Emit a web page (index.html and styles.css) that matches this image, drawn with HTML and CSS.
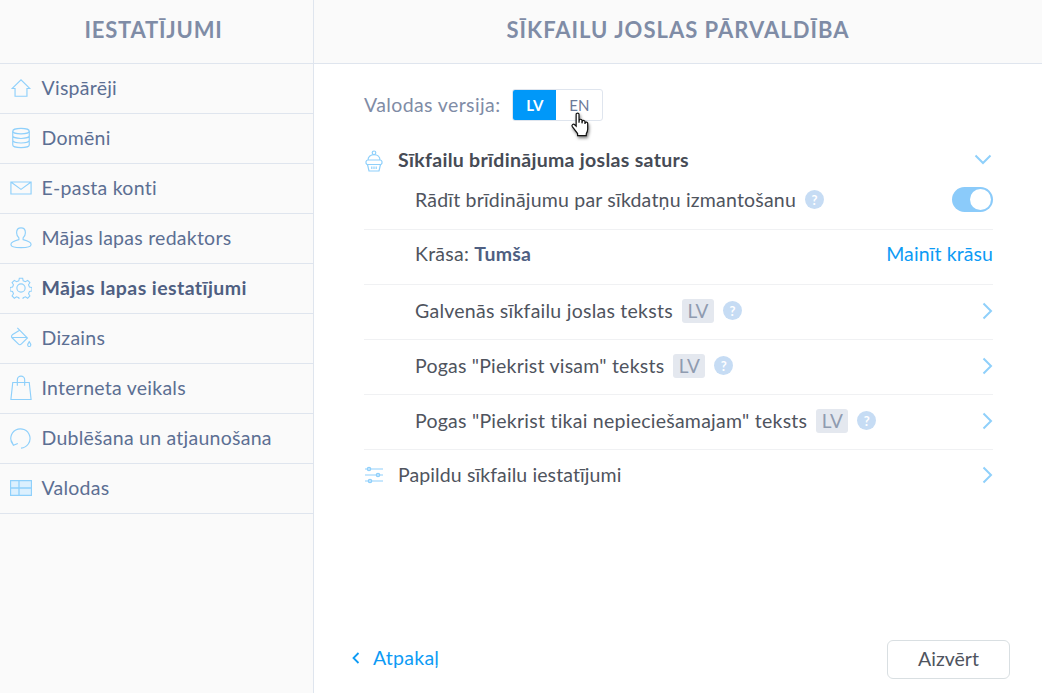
FILE: index.html
```html
<!DOCTYPE html>
<html lang="lv">
<head>
<meta charset="utf-8">
<title>Iestatījumi</title>
<link rel="stylesheet" href="styles.css">
</head>
<body>
<div class="app">
  <aside class="sidebar">
    <header class="head head-side">IESTATĪJUMI</header>
    <nav class="nav">
      <a class="nav-item"><svg class="nav-ico" viewBox="0 0 24 24"><path d="M2.500 12.500 12 3l9.500 9.500h-3V21h-13v-8.500z"/></svg>Vispārēji</a>
      <a class="nav-item"><svg class="nav-ico" viewBox="0 0 24 24"><ellipse cx="12" cy="4.500" rx="9" ry="3"/><path d="M3 4.500v15c0 1.600 4 3 9 3s9-1.400 9-3v-15M3 9.500c0 1.600 4 3 9 3s9-1.400 9-3M3 14.500c0 1.600 4 3 9 3s9-1.400 9-3"/></svg>Domēni</a>
      <a class="nav-item"><svg class="nav-ico" viewBox="0 0 24 24"><path d="M1 5.500h22v13H1zM1 5.500 12 13.500l11-8"/></svg>E-pasta konti</a>
      <a class="nav-item"><svg class="nav-ico" viewBox="0 0 24 24"><path d="M12 1c-3 0-4.800 2.300-4.800 5.300 0 2.500 1.200 4.300 2.500 5.500v2c-3 .8-8.700 2.300-8.700 5.200 0 2.300 3.500 3.500 11 3.500s11-1.200 11-3.500c0-2.900-5.700-4.400-8.700-5.200v-2c1.300-1.200 2.500-3 2.500-5.500C16.800 3.300 15 1 12 1z"/></svg>Mājas lapas redaktors</a>
      <a class="nav-item is-active"><svg class="nav-ico" viewBox="0 0 24 24"><circle cx="12" cy="12" r="4.500"/><path d="M10 1h4l.6 3 2.700 1.100 2.600-1.700 2.700 2.700-1.700 2.600 1.100 2.700 3 .6v4l-3 .6-1.100 2.700 1.700 2.600-2.700 2.700-2.600-1.700-2.700 1.100-.6 3h-4l-.6-3-2.700-1.100-2.600 1.700-2.700-2.700 1.700-2.600-1.100-2.700-3-.6v-4l3-.6 1.100-2.700-1.700-2.600 2.700-2.700 2.600 1.700L9.400 4z" transform="translate(12 12) scale(.92) translate(-12 -12.500)"/></svg>Mājas lapas iestatījumi</a>
      <a class="nav-item"><svg class="nav-ico" viewBox="0 0 24 24"><path d="M10.500 3.500 19 12l-6.500 6.500a2.500 2.500 0 0 1-3.500 0L2.500 12a2.500 2.500 0 0 1 0-3.500zM1.500 11.500h17.200M8 1l2.500 2.500M21 16c-1 1.500-1.700 2.500-1.700 3.600a1.700 1.700 0 0 0 3.400 0c0-1.100-.7-2.100-1.700-3.600z"/></svg>Dizains</a>
      <a class="nav-item"><svg class="nav-ico ico-tall" viewBox="0 0 24 27"><path d="M3 7.500h18l2 18.500H1zM8 11V4.500a4 4 0 0 1 8 0V11"/></svg>Interneta veikals</a>
      <a class="nav-item"><svg class="nav-ico" viewBox="0 0 24 24"><path d="M3.500 19.500A10.500 10.500 0 1 1 12 23M1.500 15l2.200 5 4.800-2"/></svg>Dublēšana un atjaunošana</a>
      <a class="nav-item"><svg class="nav-ico ico-table" viewBox="0 0 22 16"><path d="M.500.500h21v15H.500zM.500 8h21M9 .500v15"/></svg>Valodas</a>
    </nav>
  </aside>
  <main class="main">
    <header class="head">SĪKFAILU JOSLAS PĀRVALDĪBA</header>
    <div class="content">
      <div class="lang-row">
        <span class="lang-label">Valodas versija:</span>
        <div class="seg">
          <span class="seg-btn seg-on">LV</span>
          <span class="seg-btn">EN</span>
          <svg class="cursor" viewBox="0 0 20 26" preserveAspectRatio="none">
            <path d="M6.500 2.200c0-1.600 2.600-1.600 2.600 0V10l.2-2.300c.2-1.400 2.500-1.300 2.500.2V10.500l.3-1.800c.3-1.300 2.400-1 2.400.4v2l.3-1c.4-1.200 2.200-.9 2.200.5v5.200c0 2-.6 3.200-1.300 4.400v1.800H7.800v-2L3 13.600c-1-1.400.8-3 2.200-1.800l1.300 1.300z"/>
          </svg>
        </div>
      </div>
      <section class="group">
        <div class="group-head">
          <svg class="g-ico" viewBox="0 0 20 22"><circle cx="10" cy="2.800" r="1.800"/><path d="M4 10C4 6.500 7 4.600 10 4.600s6 1.900 6 5.400M3 14.500c-2-1.500-1-4.500 1-4.500h12c2 0 3 3 1 4.500zM3.500 14.500 5 21h10l1.500-6.500M7.800 16.500v2.500M12.200 16.500v2.500M10 16.500v2.500"/></svg>
          <span class="group-title">Sīkfailu brīdinājuma joslas saturs</span>
          <svg class="chev-down" viewBox="0 0 18 11"><path d="M1.500 1.500 9 9l7.500-7.500"/></svg>
        </div>
        <div class="sub sub-first">
          <span class="sub-text sub-tight">Rādīt brīdinājumu par sīkdatņu izmantošanu</span><span class="help">?</span>
          <span class="toggle"><span class="knob"></span></span>
        </div>
        <div class="sub sub-color">
          <span class="sub-text">Krāsa: <b class="strong">Tumša</b></span>
          <a class="link">Mainīt krāsu</a>
        </div>
        <div class="sub">
          <span class="sub-text">Galvenās sīkfailu joslas teksts</span><span class="tag">LV</span><span class="help">?</span>
          <svg class="chev" viewBox="0 0 11 18"><path d="M1.500 1.500 9 9l-7.500 7.500"/></svg>
        </div>
        <div class="sub">
          <span class="sub-text sub-short">Pogas "Piekrist visam" teksts</span><span class="tag">LV</span><span class="help">?</span>
          <svg class="chev" viewBox="0 0 11 18"><path d="M1.500 1.500 9 9l-7.500 7.500"/></svg>
        </div>
        <div class="sub">
          <span class="sub-text">Pogas "Piekrist tikai nepieciešamajam" teksts</span><span class="tag">LV</span><span class="help">?</span>
          <svg class="chev" viewBox="0 0 11 18"><path d="M1.500 1.500 9 9l-7.500 7.500"/></svg>
        </div>
      </section>
      <div class="group-foot">
        <svg class="g-ico g-ico-s" viewBox="0 0 20 18"><path d="M1 3h18M1 9h18M1 15h18"/><circle cx="5" cy="3" r="1.700"/><circle cx="14" cy="9" r="1.700"/><circle cx="6" cy="15" r="1.700"/></svg>
        <span class="foot-title">Papildu sīkfailu iestatījumi</span>
        <svg class="chev" viewBox="0 0 11 18"><path d="M1.500 1.500 9 9l-7.500 7.500"/></svg>
      </div>
    </div>
    <footer class="footer">
      <a class="back"><svg class="back-ico" viewBox="0 0 8 12"><path d="M6.500 1 1.500 6l5 5"/></svg>Atpakaļ</a>
      <button class="close">Aizvērt</button>
    </footer>
  </main>
</div>
</body>
</html>
```
FILE: styles.css
```css
* { box-sizing: border-box; }
html, body { margin: 0; height: 100%; }
body { font-family: Lato, "Noto Sans", sans-serif; font-size: 19.5px; letter-spacing: .25px; color: #4a4f5a; background: #fff; overflow: hidden; }
.app { display: flex; height: 693px; }
.sidebar { width: 314px; flex: none; background: #fafafa; border-right: 1px solid #dfe5ee; }
.main { flex: 1; display: flex; flex-direction: column; min-width: 0; }
.head { height: 64px; background: #fafafa; border-bottom: 1px solid #dfe5ee; display: flex; align-items: center; justify-content: center; font-size: 22px; font-weight: 700; letter-spacing: 1px; color: #7f8ca6; padding-bottom: 5px; }
.head-side { padding-right: 6px; letter-spacing: .8px; }
.nav-item { height: 50px; display: flex; align-items: center; border-bottom: 1px solid #dfe5ee; padding-left: 10px; color: #5c6f93; padding-bottom: 2px; }
.nav-item.is-active { font-weight: 700; color: #4f5f82; letter-spacing: .42px; }
.nav-ico { width: 22px; height: 22px; margin-right: 9.500px; flex: none; fill: none; stroke: #8fd0fb; stroke-width: 1.250; }
.ico-tall { height: 26px; }
.ico-table { height: 16px; fill: #dcf0fe; stroke-width: 1.300; }
.content { padding: 25px 49px 0 50px; }
.lang-row { display: flex; align-items: center; height: 32px; }
.lang-label { color: #7f8ca6; margin-right: 12px; padding-bottom: 2px; letter-spacing: .39px; }
.seg { position: relative; display: flex; width: 91px; height: 32px; border: 1px solid #dfe5ee; border-radius: 3px; }
.seg-btn { flex: 1; display: flex; align-items: center; justify-content: center; font-size: 15px; color: #6b7a98; }
.seg-on { flex: none; width: 43px; background: #0098f9; color: #fff; font-weight: 700; border-radius: 2px 0 0 2px; }
.cursor { position: absolute; left: 56px; top: 22px; width: 22px; height: 28px; fill: #fff; stroke: #111; stroke-width: 1.100; filter: drop-shadow(1px 2px 1.500px rgba(0,0,0,.5)); }
.group { margin-top: 23px; }
.group-head { display: flex; align-items: center; height: 31px; }
.g-ico { width: 20px; height: 22px; margin-right: 14px; margin-top: 3px; flex: none; fill: none; stroke: #8fd0fb; stroke-width: 1.200; }
.g-ico-s { height: 18px; margin-top: 0; }
.group-title { font-weight: 700; font-size: 19.500px; letter-spacing: .3px; color: #464b55; flex: 1; }
.chev-down { width: 18px; height: 11px; margin-right: 1px; fill: none; stroke: #8fd0fb; stroke-width: 2; }
.sub { height: 55px; padding-left: 51px; padding-bottom: 3px; display: flex; align-items: center; border-bottom: 1px solid #f0f1f3; color: #4f545e; }
.sub-first { padding-bottom: 5px; }
.sub-color { padding-bottom: 7px; }
.sub-tight { letter-spacing: .2px; }
.sub-short { letter-spacing: .22px; }
.strong { font-weight: 700; color: #4f5f82; }
.help { width: 19px; height: 19px; margin-left: 9px; border-radius: 50%; background: #c6dcf4; color: #fff; font-size: 13px; font-weight: 700; display: flex; align-items: center; justify-content: center; letter-spacing: 0; }
.tag { height: 24px; width: 32px; margin-left: 9px; border-radius: 3px; background: #e4e8ef; color: #8f9bb0; font-size: 19px; display: flex; align-items: center; justify-content: center; letter-spacing: 0; }
.toggle { margin-left: auto; width: 41px; height: 25px; border-radius: 13px; background: #8bcbfa; display: flex; align-items: center; justify-content: flex-end; padding-right: 2px; }
.knob { width: 21px; height: 21px; background: #fff; border-radius: 50%; }
.link { margin-left: auto; color: #0d9bf5; letter-spacing: .1px; }
.chev { margin-left: auto; width: 11px; height: 18px; flex: none; fill: none; stroke: #8fd0fb; stroke-width: 2; }
.group-foot { display: flex; align-items: center; height: 50px; }
.foot-title { color: #4f545e; letter-spacing: .1px; padding-bottom: 2px; }
.footer { margin-top: auto; display: flex; align-items: center; justify-content: space-between; padding: 0 32px 14px 38px; }
.back { display: flex; align-items: center; color: #0d9bf5; padding-bottom: 4px; }
.back-ico { width: 8px; height: 12px; margin-right: 13px; fill: none; stroke: #0d9bf5; stroke-width: 1.800; }
.close { width: 123px; height: 39px; border: 1px solid #d9dfe2; border-radius: 6px; background: #fff; font: inherit; letter-spacing: 0; color: #4f545e; padding-bottom: 3px; }
```
